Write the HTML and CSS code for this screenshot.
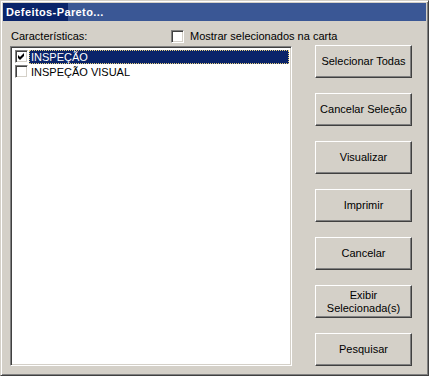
FILE: index.html
```html
<!DOCTYPE html>
<html>
<head>
<meta charset="utf-8">
<link rel="stylesheet" href="styles.css">
</head>
<body>
<div class="window">
  <div class="titlebar"><span class="title">Defeitos-Pareto...</span></div>
  <div class="client">
    <div class="left">
      <div class="head">
        <span class="label">Características:</span>
        <label class="opt"><span class="cb"></span><span>Mostrar selecionados na carta</span></label>
      </div>
      <div class="listbox">
        <div class="item selected">
          <span class="cb checked"><svg width="7" height="7" viewBox="0 0 7 7"><path d="M0 2 L2 4 L6 0 L6 3 L2 7 L0 5 Z" fill="#000"/></svg></span>
          <span class="text">INSPEÇÃO</span>
        </div>
        <div class="item">
          <span class="cb"></span>
          <span class="text">INSPEÇÃO VISUAL</span>
        </div>
      </div>
    </div>
    <div class="buttons">
      <button class="btn">Selecionar Todas</button>
      <button class="btn">Cancelar Seleção</button>
      <button class="btn">Visualizar</button>
      <button class="btn">Imprimir</button>
      <button class="btn">Cancelar</button>
      <button class="btn">Exibir<br>Selecionada(s)</button>
      <button class="btn">Pesquisar</button>
    </div>
  </div>
</div>
</body>
</html>
```

FILE: styles.css
```css
html, body {
  margin: 0;
  padding: 0;
  background: #d4d0c8;
}
body {
  font-family: "Liberation Sans", Arial, sans-serif;
  font-size: 11px;
  color: #000;
}
.window {
  width: 429px;
  height: 376px;
  box-sizing: border-box;
  border: 1px solid;
  border-color: #d4d0c8 #404040 #404040 #d4d0c8;
  box-shadow: inset 1px 1px #fff, inset -1px -1px #808080;
  padding: 2px;
  background: #d4d0c8;
  display: flex;
  flex-direction: column;
}
.titlebar {
  height: 18px;
  flex: none;
  background: linear-gradient(to right, #0a246a 0, #0a246a 65px, #3a5795 65px, #3a5795 100%);
  display: flex;
  align-items: center;
  padding-left: 3px;
}
.title {
  color: #fff;
  font-weight: bold;
  font-size: 11px;
  letter-spacing: 0.4px;
}
.client {
  flex: 1;
  display: flex;
  padding: 0 0 9px 7px;
}
.left {
  width: 282px;
  flex: none;
  display: flex;
  flex-direction: column;
}
.head {
  height: 25px;
  display: flex;
  align-items: flex-end;
  padding-bottom: 3px;
  box-sizing: border-box;
  white-space: nowrap;
}
.label {
  padding-left: 1px;
  width: 160px;
  flex: none;
  line-height: 13px;
}
.opt {
  display: flex;
  align-items: center;
  gap: 6px;
  line-height: 13px;
  flex: none;
  white-space: nowrap;
}
.cb {
  width: 13px;
  height: 13px;
  box-sizing: border-box;
  background: #fff;
  border: 1px solid;
  border-color: #808080 #fff #fff #808080;
  box-shadow: inset 1px 1px #404040, inset -1px -1px #d4d0c8;
  display: inline-flex;
  align-items: center;
  justify-content: center;
  flex: none;
}
.listbox {
  flex: 1;
  background: #fff;
  border: 1px solid;
  border-color: #808080 #fff #fff #808080;
  box-shadow: inset 1px 1px #404040, inset -1px -1px #d4d0c8;
  padding: 2px 2px 2px 4px;
}
.item {
  height: 15px;
  display: flex;
  align-items: center;
}
.item .cb {
  margin-right: 1px;
}
.item .text {
  flex: 1;
  height: 14px;
  line-height: 12px;
  padding-left: 1px;
  box-sizing: border-box;
  border: 1px solid transparent;
}
.item.selected .text {
  background: #0a246a;
  color: #fff;
  border: 1px dotted #e7cf7d;
}
.buttons {
  margin-left: 23px;
  padding-top: 24px;
  display: flex;
  flex-direction: column;
  gap: 15px;
}
.btn {
  width: 97px;
  height: 33px;
  box-sizing: border-box;
  background: #d4d0c8;
  border: 1px solid;
  border-color: #fff #404040 #404040 #fff;
  box-shadow: inset -1px -1px #808080;
  font-family: "Liberation Sans", Arial, sans-serif;
  font-size: 11px;
  line-height: 13px;
  color: #000;
  padding: 0;
  text-align: center;
}
```
